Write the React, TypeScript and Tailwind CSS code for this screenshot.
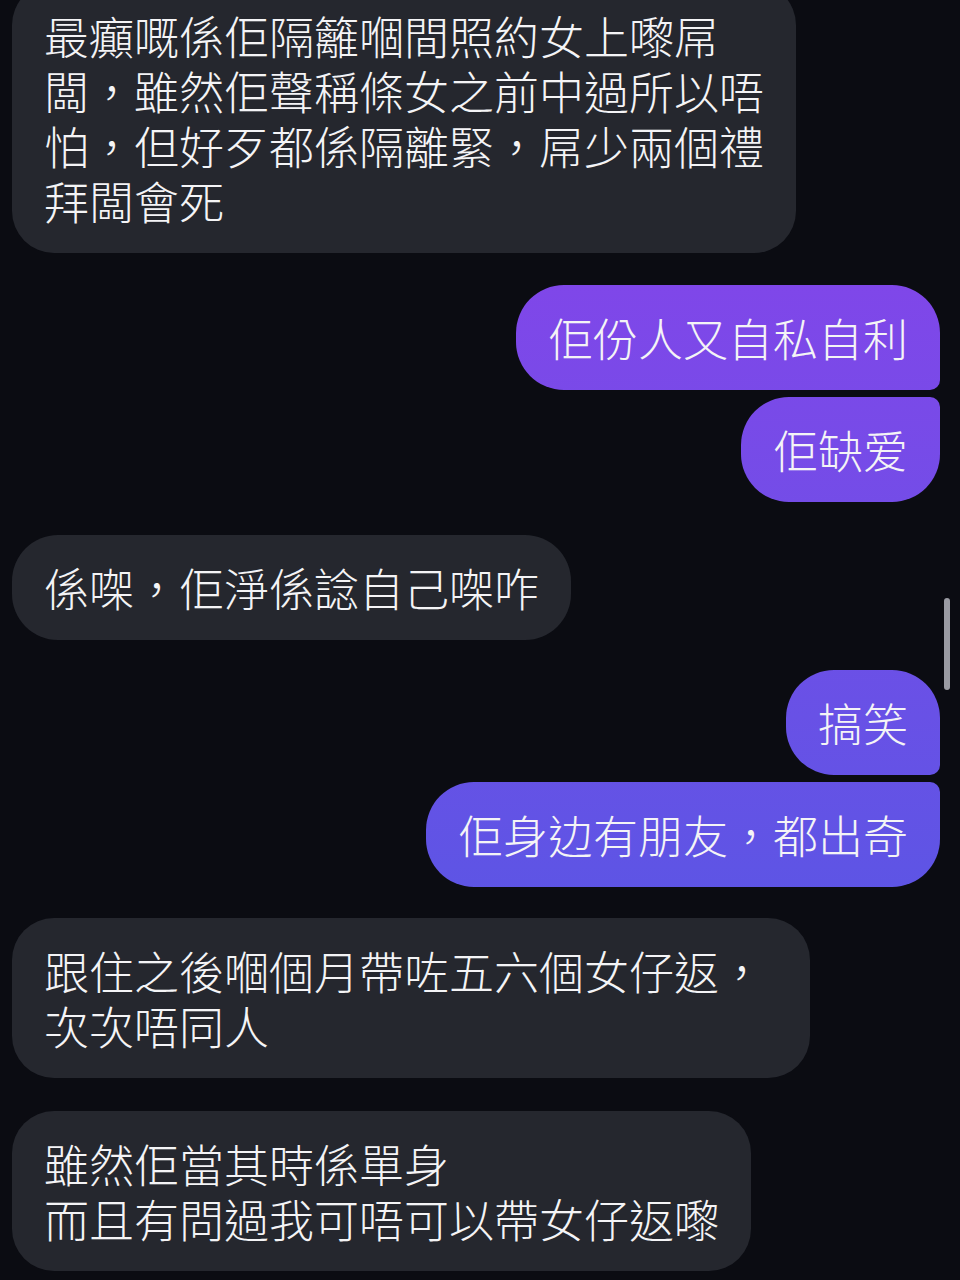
import React from 'react';

type Message = {
  id: number;
  side: 'left' | 'right';
  text: string;
  corners: string;
  gap: string;
};

const messages: Message[] = [
  {
    id: 1,
    side: 'left',
    text: '最癲嘅係佢隔籬嗰間照約女上嚟屌\n闆，雖然佢聲稱條女之前中過所以唔\n怕，但好歹都係隔離緊，屌少兩個禮\n拜闆會死',
    corners: 'rounded-[42px]',
    gap: '-mt-[17px]',
  },
  {
    id: 2,
    side: 'right',
    text: '佢份人又自私自利',
    corners: 'rounded-[48px] rounded-br-[10px]',
    gap: 'mt-[32px]',
  },
  {
    id: 3,
    side: 'right',
    text: '佢缺爱',
    corners: 'rounded-[48px] rounded-tr-[10px]',
    gap: 'mt-[7px]',
  },
  {
    id: 4,
    side: 'left',
    text: '係㗎，佢淨係諗自己㗎咋',
    corners: 'rounded-[46px]',
    gap: 'mt-[33px]',
  },
  {
    id: 5,
    side: 'right',
    text: '搞笑',
    corners: 'rounded-[48px] rounded-br-[10px]',
    gap: 'mt-[30px]',
  },
  {
    id: 6,
    side: 'right',
    text: '佢身边有朋友，都出奇',
    corners: 'rounded-[48px] rounded-tr-[10px]',
    gap: 'mt-[7px]',
  },
  {
    id: 7,
    side: 'left',
    text: '跟住之後嗰個月帶咗五六個女仔返，\n次次唔同人',
    corners: 'rounded-[42px] pr-[46px]',
    gap: 'mt-[31px]',
  },
  {
    id: 8,
    side: 'left',
    text: '雖然佢當其時係單身\n而且有問過我可唔可以帶女仔返嚟',
    corners: 'rounded-[42px]',
    gap: 'mt-[33px]',
  },
];

const App: React.FC = () => {
  return (
    <div
      className="relative w-[960px] h-[1280px] overflow-hidden bg-[#0b0c12] text-[#f4f4f6]"
      style={{ fontFamily: '"Noto Sans CJK TC", "Noto Sans CJK SC", "Noto Sans", sans-serif' }}
    >
      <div className="flex flex-col pl-[12px] pr-[20px]">
        {messages.map((msg) => (
          <div
            key={msg.id}
            className={`flex ${msg.side === 'right' ? 'justify-end' : 'justify-start'} ${msg.gap}`}
          >
            <div
              className={`pl-8 pr-8 py-[25px] text-[45px] leading-[55px] font-light whitespace-pre-line ${msg.corners} ${
                msg.side === 'right'
                  ? 'bg-linear-to-b from-[#8d3eeb] to-[#415be2] bg-fixed'
                  : 'bg-[#25272e] max-w-[820px]'
              }`}
            >
              {msg.text}
            </div>
          </div>
        ))}
      </div>

      {/* scroll indicator */}
      <div className="absolute right-[10px] top-[598px] w-[6px] h-[92px] rounded-full bg-[#9a9ba3]" />
    </div>
  );
};

export default App;
